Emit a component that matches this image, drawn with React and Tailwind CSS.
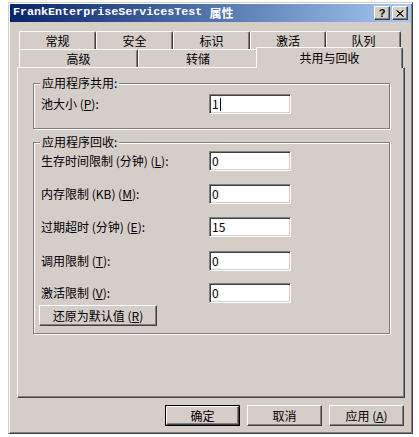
import React from "react";

const font = { fontFamily: '"Noto Sans CJK SC", "Liberation Sans", sans-serif' };

const backTabs = [
    { label: "常规", w: "w-[77px]" },
    { label: "安全", w: "w-[77px]" },
    { label: "标识", w: "w-[77px]" },
    { label: "激活", w: "w-[76px]" },
    { label: "队列", w: "w-[75px]" },
];

const recycleRows = [
    { label: "生存时间限制 (分钟) (", key: "L", value: "0", mt: "mt-[8px]" },
    { label: "内存限制 (KB) (", key: "M", value: "0", mt: "mt-[13px]" },
    { label: "过期超时 (分钟) (", key: "E", value: "15", mt: "mt-[13px]" },
    { label: "调用限制 (", key: "T", value: "0", mt: "mt-[14px]" },
    { label: "激活限制 (", key: "V", value: "0", mt: "mt-[12px]" },
];

function Tab({ label, w }) {
    return (
        <div
            className={`${w} h-[18px] flex items-center justify-center rounded-t-[2px] border-t border-l border-t-white border-l-white border-r border-r-[#404040] shadow-[inset_-1px_0_0_#808080] text-[12px] text-black`}
        >
            {label}
        </div>
    );
}

function TextBox({ value, caret }) {
    return (
        <div className="w-[82px] h-[20px] bg-white border border-t-[#808080] border-l-[#808080] border-r-white border-b-white shadow-[inset_1px_1px_0_#404040,inset_-1px_-1px_0_#d4d0c8] flex items-center pl-[2px] text-[12px] text-black leading-none">
            {value}
            {caret && <span className="ml-[1px] inline-block w-[1px] h-[13px] bg-black" />}
        </div>
    );
}

function Button({ children, w = "w-[75px]", isDefault }) {
    return (
        <div className={`${w} h-[21px] ${isDefault ? "border border-black" : ""}`}>
            <div className="w-full h-full flex items-center justify-center border border-t-white border-l-white border-r-[#404040] border-b-[#404040] shadow-[inset_-1px_-1px_0_#808080] text-[12px] text-black">
                {children}
            </div>
        </div>
    );
}

function Group({ title, className, children }) {
    return (
        <div className={`relative border border-[#808080] shadow-[inset_1px_1px_0_#fff,1px_1px_0_#fff] ${className}`}>
            <span className="absolute left-[6px] top-[-9px] px-[2px] bg-[#d4cdc8] text-[12px] leading-[16px] text-black">
                {title}
            </span>
            {children}
        </div>
    );
}

export default function App() {
    return (
        <div className="w-[419px] h-[437px] bg-white overflow-hidden" style={font}>
            {/* Window */}
            <div className="ml-[8px] mt-[2px] w-[405px] h-[432px] bg-[#d4cdc8] border border-t-[#d4d0c8] border-l-[#d4d0c8] border-r-[#404040] border-b-[#404040] shadow-[inset_1px_1px_0_#fff,inset_-1px_-1px_0_#808080] p-[1px] flex flex-col">

                {/* Title bar */}
                <div className="h-[18px] flex items-center justify-between pl-[3px] pr-[3px] bg-gradient-to-r from-[#0a246a] to-[#a6caf0]">
                    <div className="flex items-center text-white font-bold whitespace-nowrap">
                        <span className="text-[11.7px]" style={{ fontFamily: '"Liberation Mono", monospace' }}>
                            FrankEnterpriseServicesTest
                        </span>
                        <span className="ml-[7px] text-[12px]">属性</span>
                    </div>
                    <div className="flex gap-[2px]">
                        <div className="w-[16px] h-[14px] bg-[#d4d0c8] border border-t-white border-l-white border-r-[#404040] border-b-[#404040] shadow-[inset_-1px_-1px_0_#808080] flex items-center justify-center text-[11px] font-bold text-black leading-none" style={{ fontFamily: '"Liberation Sans", sans-serif' }}>
                            ?
                        </div>
                        <div className="w-[16px] h-[14px] bg-[#d4d0c8] border border-t-white border-l-white border-r-[#404040] border-b-[#404040] shadow-[inset_-1px_-1px_0_#808080] flex items-center justify-center">
                            <svg width="8" height="7" viewBox="0 0 8 7">
                                <path d="M0.5 0.5 L7 6.5 M1.5 0.5 L7.5 6.5 M7 0.5 L0.5 6.5 M7.5 0.5 L1 6.5" stroke="#000" strokeWidth="1" />
                            </svg>
                        </div>
                    </div>
                </div>

                {/* Body */}
                <div className="flex-1 flex flex-col pl-[7px] pr-[6px] pt-[9px]">

                    {/* Tabs */}
                    <div className="flex ml-[2px] h-[18px]">
                        {backTabs.map((tab) => (
                            <Tab key={tab.label} label={tab.label} w={tab.w} />
                        ))}
                    </div>
                    <div className="flex items-end ml-[2px] h-[18px]">
                        <Tab label="高级" w="w-[119px]" />
                        <Tab label="转储" w="w-[120px]" />
                        <div className="relative z-10 -ml-[2px] w-[147px] h-[21px] -mb-[1px] bg-[#d4cdc8] rounded-t-[2px] border-t border-l border-t-white border-l-white border-r border-r-[#404040] shadow-[inset_-1px_0_0_#808080] flex justify-center pt-[1px] text-[12px] text-black">
                            共用与回收
                        </div>
                    </div>

                    {/* Panel */}
                    <div className="h-[331px] border border-t-white border-l-white border-r-[#404040] border-b-[#404040] shadow-[inset_-1px_-1px_0_#808080] pl-[15px] pt-[15px]">

                        <Group title="应用程序共用:" className="w-[357px] h-[46px]">
                            <div className="flex items-center mt-[10px]">
                                <div className="w-[175px] pl-[7px] text-[12px] text-black">
                                    池大小 (<span className="underline">P</span>):
                                </div>
                                <TextBox value="1" caret />
                            </div>
                        </Group>

                        <Group title="应用程序回收:" className="w-[357px] h-[192px] mt-[13px]">
                            <div className="flex flex-col">
                                {recycleRows.map((row) => (
                                    <div key={row.key} className={`flex items-center ${row.mt}`}>
                                        <div className="w-[175px] pl-[7px] text-[12px] text-black whitespace-nowrap">
                                            {row.label}
                                            <span className="underline">{row.key}</span>):
                                        </div>
                                        <TextBox value={row.value} />
                                    </div>
                                ))}
                                <div className="mt-[2px] ml-[5px]">
                                    <Button w="w-[118px]">
                                        还原为默认值 (<span className="underline">R</span>)
                                    </Button>
                                </div>
                            </div>
                        </Group>
                    </div>

                    {/* Dialog buttons */}
                    <div className="flex justify-end gap-[7px] mt-[7px] mr-[1px]">
                        <Button isDefault>确定</Button>
                        <Button>取消</Button>
                        <Button>
                            应用 (<span className="underline">A</span>)
                        </Button>
                    </div>
                </div>
            </div>
        </div>
    );
}
